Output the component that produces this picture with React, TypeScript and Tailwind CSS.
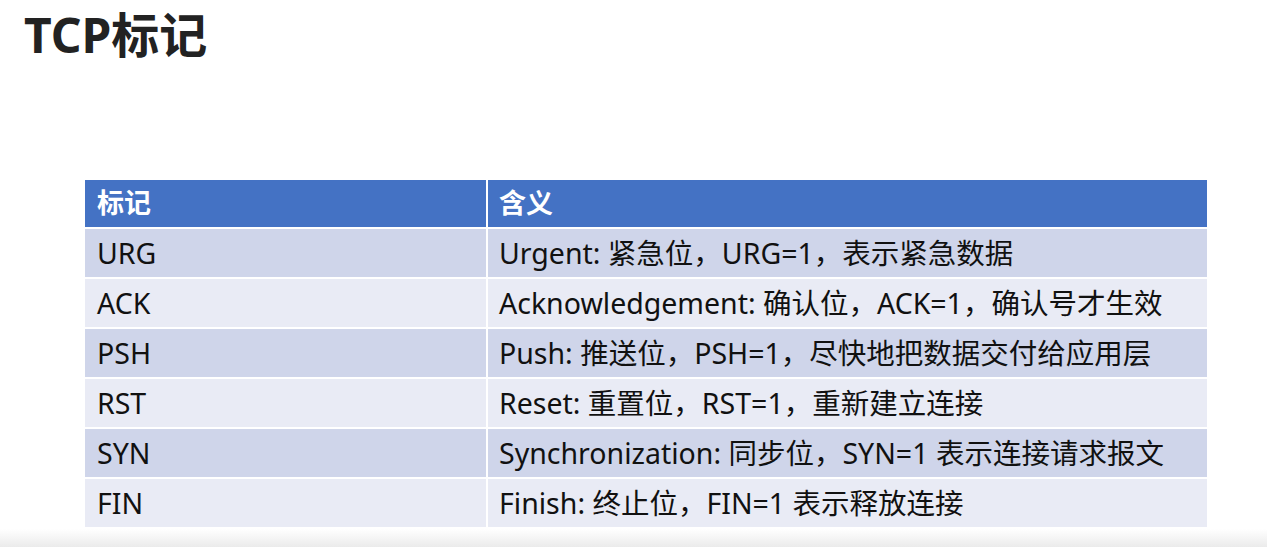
const rows = [
  { flag: "URG", meaning: "Urgent: 紧急位，URG=1，表示紧急数据" },
  { flag: "ACK", meaning: "Acknowledgement: 确认位，ACK=1，确认号才生效" },
  { flag: "PSH", meaning: "Push: 推送位，PSH=1，尽快地把数据交付给应用层" },
  { flag: "RST", meaning: "Reset: 重置位，RST=1，重新建立连接" },
  { flag: "SYN", meaning: "Synchronization: 同步位，SYN=1 表示连接请求报文" },
  { flag: "FIN", meaning: "Finish: 终止位，FIN=1 表示释放连接" },
];

export default function App() {
  return (
    <div
      className="w-[1267px] h-[547px] bg-white flex flex-col overflow-hidden text-[#111]"
      style={{ fontFamily: '"Noto Sans", "Noto Sans CJK SC", sans-serif' }}
    >
      <h1 className="pl-[24px] pt-[6px] h-[180px] text-[48px] font-bold leading-[58px] text-[#222]">
        TCP标记
      </h1>

      <div className="ml-[85px] w-[1122px] flex flex-col gap-[2px]">
        <div className="flex gap-[2px] h-[47px] text-white font-bold text-[27px]">
          <div className="w-[401px] pl-[12px] flex items-center bg-[#4472c4]">标记</div>
          <div className="flex-1 pl-[11px] flex items-center bg-[#4472c4]">含义</div>
        </div>
        {rows.map((r, i) => {
          const bg = i % 2 === 0 ? "bg-[#cfd5ea]" : "bg-[#e9ebf5]";
          return (
            <div key={r.flag} className="flex gap-[2px] h-[48px] text-[28.5px] leading-none">
              <div className={`w-[401px] pl-[12px] flex items-center ${bg}`}>{r.flag}</div>
              <div className={`flex-1 pl-[11px] flex items-center whitespace-nowrap ${bg}`}>
                {r.meaning}
              </div>
            </div>
          );
        })}
      </div>

      <div className="flex-1 mt-[2px] bg-gradient-to-b from-white to-[#ebebeb]" />
    </div>
  );
}
